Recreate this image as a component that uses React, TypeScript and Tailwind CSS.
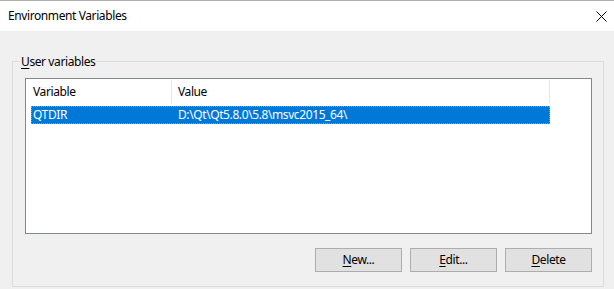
import React from 'react';

const font = { fontFamily: '"Noto Sans", "Open Sans", sans-serif' };

function Btn({ first, rest }: { first: string; rest: string }) {
  return (
    <button className="w-[87px] h-[24px] bg-[#e1e1e1] border border-[#adadad] text-[12px] leading-none text-black flex items-center justify-center">
      <span>
        <span className="underline underline-offset-2">{first}</span>
        {rest}
      </span>
    </button>
  );
}

export default function App() {
  return (
    <div
      className="w-[614px] h-[289px] bg-[#f0f0f0] border-t border-[#b0b0b0] overflow-hidden tracking-[-0.4px]"
      style={font}
    >
      {/* title bar */}
      <div className="h-[30px] bg-white flex items-center justify-between pl-[8px] pr-[7px]">
        <span className="text-[12px] text-black">Environment Variables</span>
        <svg width="11" height="11" viewBox="0 0 11 11">
          <path d="M0.5 0.5 L10.5 10.5 M10.5 0.5 L0.5 10.5" stroke="#000" strokeWidth="1" />
        </svg>
      </div>

      {/* group box */}
      <div className="relative ml-[12px] mt-[30px] w-[592px] h-[226px] border border-[#dcdcdc] pl-[12px] pt-[16px]">
        <span className="absolute left-[7px] top-[-8px] px-[1px] bg-[#f0f0f0] text-[12px] leading-[16px] text-black">
          <span className="underline underline-offset-2">U</span>ser variables
        </span>

        {/* list view */}
        <div className="w-[567px] h-[156px] border border-[#828790] bg-white">
          <div className="h-[25px] flex text-[12px] text-black">
            <div className="w-[145px] pl-[7px] flex items-center">Variable</div>
            <div className="w-px bg-[#e5e5e5] mt-px mb-px" />
            <div className="w-[377px] pl-[6px] flex items-center">Value</div>
            <div className="w-px bg-[#e5e5e5] mt-px mb-px" />
          </div>
          <div className="ml-[5px] mt-[2px] w-[519px] h-[18px] bg-[#0078d7] border border-dotted border-[#f08a24] flex items-center text-[12px] text-white">
            <div className="w-[146px] pl-[1px]">QTDIR</div>
            <div>D:\Qt\Qt5.8.0\5.8\msvc2015_64\</div>
          </div>
        </div>

        {/* buttons */}
        <div className="mt-[14px] w-[567px] flex justify-end gap-[8px]">
          <Btn first="N" rest="ew..." />
          <Btn first="E" rest="dit..." />
          <Btn first="D" rest="elete" />
        </div>
      </div>
    </div>
  );
}
